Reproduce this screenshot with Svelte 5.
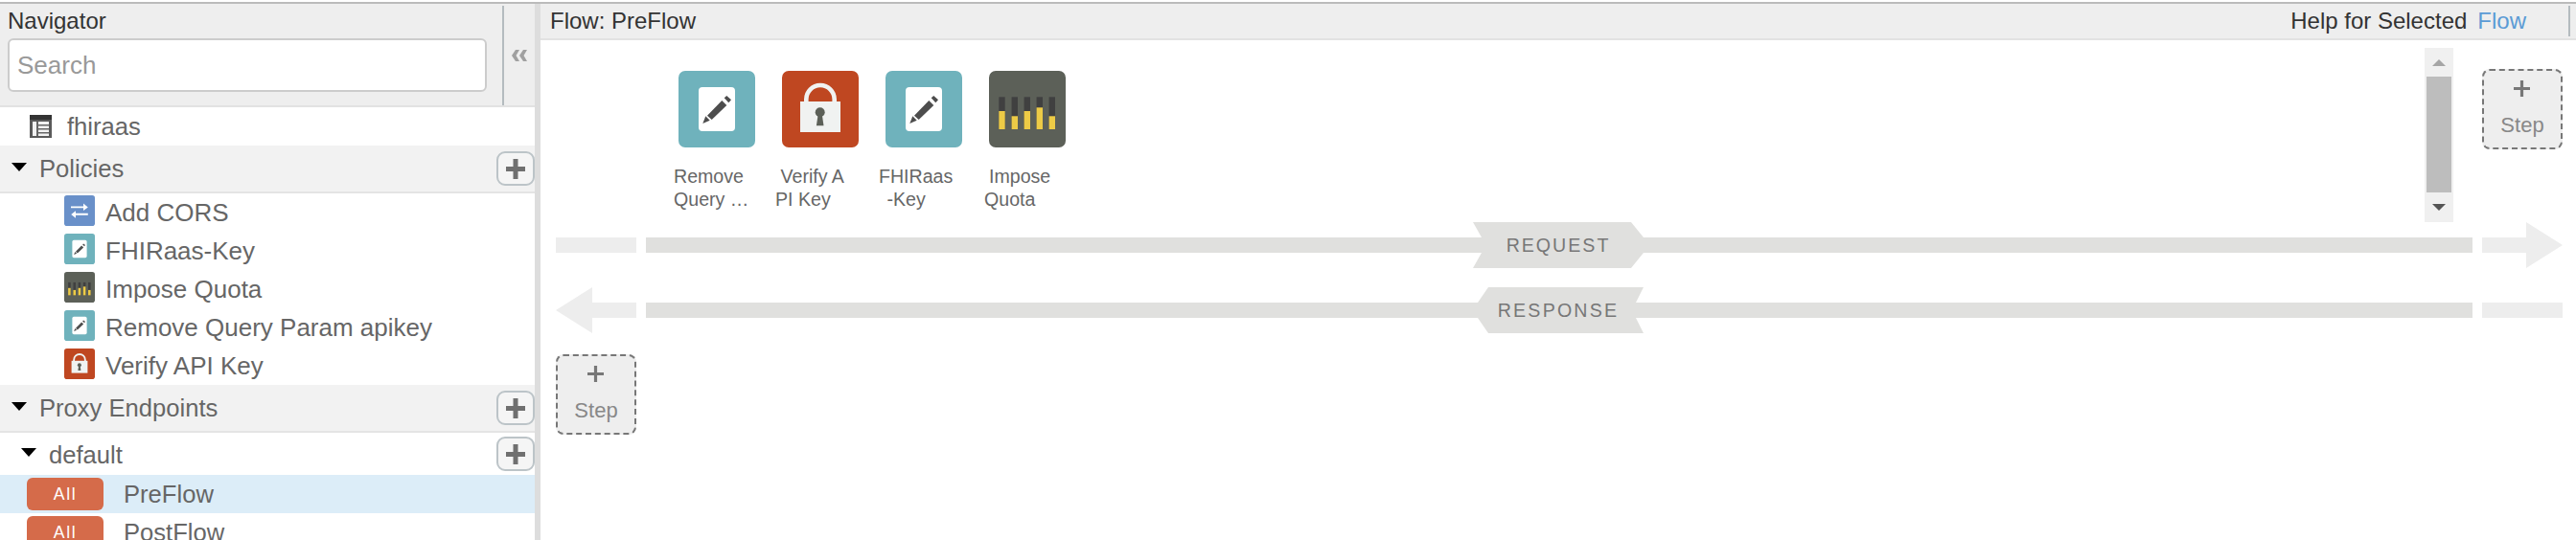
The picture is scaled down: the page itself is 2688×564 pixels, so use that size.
<script>
  const policies = [
    { name: 'Add CORS', kind: 'cors' },
    { name: 'FHIRaas-Key', kind: 'edit' },
    { name: 'Impose Quota', kind: 'quota' },
    { name: 'Remove Query Param apikey', kind: 'edit' },
    { name: 'Verify API Key', kind: 'lock' }
  ];
  const steps = [
    { kind: 'edit', lines: [{ t: 'Remove', x: -5 }, { t: 'Query …', x: -5 }] },
    { kind: 'lock', lines: [{ t: 'Verify A', x: -1.5 }, { t: 'PI Key', x: -7 }] },
    { kind: 'edit', lines: [{ t: 'FHIRaas', x: -7 }, { t: '-Key', x: 1.5 }] },
    { kind: 'quota', lines: [{ t: 'Impose', x: 0 }, { t: 'Quota', x: -5 }] }
  ];
  const bars = [
    { x: 10.3, top: 42 },
    { x: 23.6, top: 47.3 },
    { x: 36.6, top: 42 },
    { x: 49.6, top: 38.3 },
    { x: 62.6, top: 47.3 }
  ];
</script>

{#snippet policyIcon(kind)}
  <svg class="picon" viewBox="0 0 80 80">
    {#if kind === 'edit'}
      <rect width="80" height="80" rx="7" fill="#6fb2bc" />
      <rect x="21" y="17" width="38" height="46" rx="4" fill="#fff" />
      <path d="M25.3 55 28.3 47.3 32.7 51.7Z" fill="#4d4d4d" />
      <path d="M30 46.7 45.3 31 50.3 36 34.7 51Z" fill="#4d4d4d" />
      <path d="M47.7 28.3 50.3 26 55 30.3 52.3 33.3Z" fill="#4d4d4d" />
    {:else if kind === 'lock'}
      <rect width="80" height="80" rx="7" fill="#bf4721" />
      <path d="M25.3 33V29.7a14.7 14.7 0 0 1 29.4 0V33" fill="none" stroke="#f0f2f1" stroke-width="4.6" />
      <rect x="19" y="32" width="42" height="32" fill="#f0f2f1" />
      <circle cx="39.7" cy="43.3" r="5" fill="#5c6058" />
      <path d="M37.7 45H41.7L43.5 57.3H35.9Z" fill="#5c6058" />
    {:else if kind === 'quota'}
      <rect width="80" height="80" rx="7" fill="#5c6058" />
      {#each bars as b}
        <rect x={b.x} y="27.3" width="6.4" height="33.7" fill="#404040" />
        <rect x={b.x} y={b.top} width="6.4" height={61 - b.top} fill="#edcb46" />
      {/each}
    {:else}
      <rect width="80" height="80" rx="7" fill="#6990c9" />
      <path d="M17.5 29H50V21.5L62 31 50 40V33H17.5Z" fill="#fff" />
      <path d="M62 47H30V40.5L18 50 30 59.5V52H62Z" fill="#fff" />
    {/if}
  </svg>
{/snippet}

{#snippet plusBtn()}
  <button class="plus" aria-label="Add">
    <svg viewBox="0 0 20 21" width="20" height="21"><path d="M7.5 0h5v8H20v5h-7.500v8h-5v-8H0V8h7.500Z" fill="#707070" /></svg>
  </button>
{/snippet}

{#snippet addStep(cls)}
  <div class="add-step {cls}">
    <svg viewBox="0 0 16 16" width="17" height="17"><path d="M6.5 0h3v6.5H16v3H9.5V16h-3V9.500H0v-3h6.500Z" fill="#777" /></svg>
    <span>Step</span>
  </div>
{/snippet}

<div class="page">
  <aside class="nav">
    <header class="nav-head">
      <div class="nav-head-main">
        <div class="title">Navigator</div>
        <input class="search" placeholder="Search" />
      </div>
      <div class="collapse">
        <svg viewBox="0 0 16 12" width="16" height="12"><path d="M4 0h4L4.500 6 8 12H4L0 6ZM12 0h4l-3.500 6 3.500 6h-4L8 6Z" fill="#a0a0a0" /></svg>
      </div>
    </header>

    <div class="proxy-row">
      <svg class="doc" viewBox="0 0 23 24" width="23" height="24">
        <rect width="23" height="24" fill="#5a5a5a" />
        <rect width="23" height="5" fill="#333" />
        <rect x="3" y="7" width="17" height="15" fill="#f2f2f2" />
        <path d="M7 7h2v15H7ZM9 10h11v1.500H9ZM9 14h11v1.500H9ZM9 18h11v1.500H9Z" fill="#666" />
      </svg>
      <span>fhiraas</span>
    </div>

    <div class="section">
      <i class="caret"></i>
      <span>Policies</span>
      {@render plusBtn()}
    </div>
    <ul class="policies">
      {#each policies as p}
        <li>{@render policyIcon(p.kind)}<span>{p.name}</span></li>
      {/each}
    </ul>

    <div class="section">
      <i class="caret"></i>
      <span>Proxy Endpoints</span>
      {@render plusBtn()}
    </div>
    <div class="endpoint">
      <i class="caret"></i>
      <span>default</span>
      {@render plusBtn()}
    </div>
    <div class="flow selected"><b class="badge">All</b><span>PreFlow</span></div>
    <div class="flow"><b class="badge">All</b><span>PostFlow</span></div>
  </aside>

  <main class="main">
    <header class="main-head">
      <span class="flow-title">Flow: PreFlow</span>
      <span class="help">Help for Selected</span>
      <a class="help-link" href="#flow">Flow</a>
      <i class="head-rule"></i>
    </header>

    <section class="lane">
      <div class="steps">
        {#each steps as s}
          <div class="step">
            {@render policyIcon(s.kind)}
            <div class="step-label">
              {#each s.lines as l}
                <div style="margin-left:{l.x}px">{l.t}</div>
              {/each}
            </div>
          </div>
        {/each}
      </div>
      <div class="scroller">
        <i class="arrow up"></i>
        <i class="thumb"></i>
        <i class="arrow down"></i>
      </div>
      {@render addStep('top-step')}
    </section>

    <div class="rail">
      <i class="stub"></i>
      <div class="track">
        <b class="tag tag-req">REQUEST</b>
      </div>
      <i class="stub arrow-right"></i>
    </div>
    <div class="rail second">
      <i class="stub arrow-left"></i>
      <div class="track">
        <b class="tag tag-res">RESPONSE</b>
      </div>
      <i class="stub"></i>
    </div>
    {@render addStep('bottom-step')}
  </main>
</div>

<style>
  :global(body) {
    margin: 0;
    background: #fff;
  }
  .page {
    display: flex;
    height: 560px;
    margin-top: 2px;
    border-top: 2px solid #bbb;
    overflow: hidden;
    font-family: "Liberation Sans", Arial, sans-serif;
    color: #666;
    font-size: 25.6px;
  }
  .nav {
    width: 558px;
    flex: none;
    border-right: 6px solid #ddd;
    overflow: hidden;
  }
  .nav-head {
    display: flex;
    height: 106px;
    background: #eee;
    border-bottom: 2px solid #e2e2e2;
  }
  .nav-head-main {
    width: 524px;
    flex: none;
    box-sizing: border-box;
    padding-left: 8px;
  }
  .title {
    height: 36px;
    line-height: 36px;
    font-size: 24px;
    color: #333;
  }
  .search {
    display: block;
    box-sizing: border-box;
    width: 500px;
    height: 56px;
    padding: 0 8px;
    border: 2px solid #ccc;
    border-radius: 6px;
    background: #fff;
    font: 26px "Liberation Sans", Arial, sans-serif;
  }
  .search::placeholder {
    color: #999;
    opacity: 1;
  }
  .collapse {
    flex: 1;
    margin-top: 2px;
    border-left: 2px solid #b4bbbf;
    padding: 46px 0 0 8px;
  }
  .collapse svg {
    display: block;
  }
  .proxy-row {
    display: flex;
    align-items: center;
    height: 40px;
    padding-left: 31px;
  }
  .doc {
    margin-right: 16px;
  }
  .section {
    display: flex;
    align-items: center;
    height: 48px;
    padding-left: 12px;
    background: #f2f2f2;
    border-bottom: 2px solid #e4e4e4;
  }
  .caret {
    width: 0;
    height: 0;
    margin: -4px 13px 0 0;
    border-style: solid;
    border-width: 9px 8px 0;
    border-color: #000 transparent transparent;
  }
  .plus {
    display: flex;
    align-items: center;
    justify-content: center;
    box-sizing: border-box;
    width: 40px;
    height: 36px;
    margin-left: auto;
    padding: 0 1px 0 0;
    border: 2px solid #bcc4c8;
    border-radius: 9px;
    background: #f5f5f5;
  }
  .policies {
    display: flex;
    flex-direction: column;
    gap: 8px;
    margin: 0;
    padding: 2px 0 6px 67px;
    list-style: none;
  }
  .policies li {
    display: flex;
    align-items: center;
    gap: 11px;
    height: 32px;
    font-size: 26px;
  }
  .policies li span {
    padding-top: 4px;
  }
  .picon {
    display: block;
    width: 32px;
    height: 32px;
    flex: none;
  }
  .endpoint {
    display: flex;
    align-items: center;
    height: 44px;
    padding-left: 22px;
  }
  .endpoint span {
    padding-top: 2px;
  }
  .flow {
    display: flex;
    align-items: center;
    height: 40px;
    padding-left: 28px;
  }
  .flow.selected {
    background: #dcedf8;
  }
  .badge {
    box-sizing: border-box;
    width: 80px;
    height: 34px;
    margin-right: 21px;
    border-radius: 6px;
    background: #d56b4a;
    color: #fff;
    font-size: 17.6px;
    font-weight: 400;
    letter-spacing: 1.6px;
    line-height: 34px;
    text-align: center;
  }
  .main {
    flex: 1;
    min-width: 0;
  }
  .main-head {
    display: flex;
    align-items: center;
    height: 36px;
    padding-left: 10px;
    background: #eee;
    border-bottom: 2px solid #e2e2e2;
    font-size: 24px;
    color: #333;
  }
  .flow-title {
    margin-right: auto;
  }
  .help-link {
    margin: 0 44px 0 11px;
    color: #5b9bd5;
    text-decoration: none;
  }
  .head-rule {
    width: 2px;
    height: 32px;
    margin-right: 6px;
    background: #b4bbbf;
  }
  .lane {
    display: flex;
    align-items: flex-start;
    height: 190px;
    padding: 0 14px 0 144px;
  }
  .steps {
    display: flex;
    flex: 1;
    margin-top: 32px;
  }
  .step {
    width: 108px;
  }
  .step .picon {
    width: 80px;
    height: 80px;
  }
  .step-label {
    margin-top: 18px;
    font-size: 19.6px;
    line-height: 24px;
    white-space: nowrap;
  }
  .scroller {
    display: flex;
    flex-direction: column;
    align-items: center;
    width: 30px;
    height: 182px;
    margin: 8px 30px 0 0;
    background: #f0f0f0;
  }
  .thumb {
    width: 26px;
    height: 121px;
    background: #bdbdbd;
  }
  .arrow {
    width: 0;
    height: 0;
    border-style: solid;
  }
  .arrow.up {
    margin: 12px 0 11px;
    border-width: 0 7px 7px;
    border-color: transparent transparent #a5a5a5;
  }
  .arrow.down {
    margin-top: 12px;
    border-width: 7px 7px 0;
    border-color: #555 transparent transparent;
  }
  .add-step {
    display: flex;
    flex-direction: column;
    align-items: center;
    box-sizing: border-box;
    width: 84px;
    height: 84px;
    padding-top: 10px;
    border: 2px dashed #777;
    border-radius: 8px;
    background: #eee;
    color: #888;
    font-size: 22px;
    flex: none;
  }
  .add-step svg {
    margin-left: -2px;
  }
  .add-step span {
    margin-top: 17px;
  }
  .top-step {
    margin-top: 30px;
  }
  .bottom-step {
    margin: 22px 0 0 16px;
  }
  .rail {
    display: flex;
    align-items: center;
    gap: 10px;
    height: 48px;
    margin: 0 14px 0 16px;
  }
  .rail.second {
    margin-top: 20px;
  }
  .stub {
    width: 84px;
    height: 16px;
    flex: none;
    background: #ededed;
  }
  .arrow-right {
    height: 48px;
    clip-path: polygon(0 16px, 46px 16px, 46px 0, 84px 24px, 46px 48px, 46px 32px, 0 32px);
  }
  .arrow-left {
    height: 48px;
    clip-path: polygon(0 24px, 38px 0, 38px 16px, 84px 16px, 84px 32px, 38px 32px, 38px 48px);
  }
  .track {
    position: relative;
    flex: 1;
    height: 16px;
    background: #e0e0de;
  }
  .tag {
    position: absolute;
    top: -16px;
    left: 50%;
    width: 178px;
    height: 48px;
    margin-left: -90px;
    background: #e0e0de;
    color: #777;
    font-size: 19.6px;
    font-weight: 400;
    line-height: 48px;
    text-align: center;
  }
  .tag-req {
    letter-spacing: 2px;
    clip-path: polygon(0 0, 165px 0, 178px 16px, 178px 32px, 165px 48px, 0 48px, 9px 32px, 9px 16px);
  }
  .tag-res {
    letter-spacing: 2.2px;
    clip-path: polygon(16px 0, 178px 0, 170px 16px, 170px 32px, 178px 48px, 16px 48px, 5px 32px, 5px 16px);
  }
</style>
